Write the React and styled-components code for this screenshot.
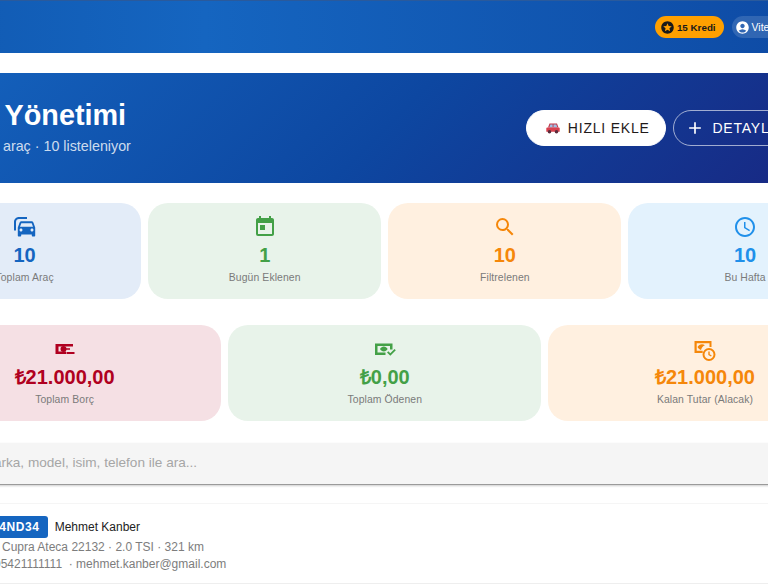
import React from 'react';
import styled, { createGlobalStyle } from 'styled-components';
import { MdAdd, MdOutlineAccessTime, MdAccountCircle, MdSearch, MdStars, MdToday } from 'react-icons/md';

const GlobalStyle = createGlobalStyle`
	html, body {
		background: #ffffff;
		margin: 0;
		overflow: hidden;
	}
	body, input {
		font-family: 'Liberation Sans', Arial, sans-serif;
	}
`;
const Viewport = styled.div`
	height: 584px;
	overflow: hidden;
	width: 768px;
`;
const Page = styled.div`
	margin-left: -116px;
	width: 1001.6px;
`;
const Nav = styled.header`
	align-items: center;
	background: linear-gradient(90deg, #1058b0 0%, #1565c0 32%, #0d47a1 100%);
	border-top: 1px solid #2a5a9c;
	box-sizing: border-box;
	display: flex;
	gap: 8px;
	height: 53px;
	justify-content: flex-end;
	padding-right: 24px;
`;
const CreditPill = styled.div`
	align-items: center;
	background: #ffa000;
	border-radius: 11px;
	color: #1a1a1a;
	display: flex;
	font-size: 9.8px;
	font-weight: 700;
	gap: 2px;
	height: 22px;
	padding: 0 8px 0 5px;
	& svg {
		font-size: 15px;
	}
`;
const UserPill = styled.div`
	align-items: center;
	background: rgba(255, 255, 255, 0.14);
	border-radius: 11px;
	box-sizing: border-box;
	color: #ffffff;
	display: flex;
	font-size: 10.4px;
	gap: 2px;
	height: 22px;
	padding: 0 8px 0 3px;
	white-space: nowrap;
	width: 130px;
	& svg {
		font-size: 15px;
	}
`;
const Hero = styled.section`
	align-items: center;
	background: linear-gradient(135deg, #1565c0 0%, #0d47a1 50%, #1a237e 100%);
	box-sizing: border-box;
	color: #ffffff;
	display: flex;
	height: 110px;
	justify-content: space-between;
	margin-top: 20px;
	padding: 0 55px 0 49px;
`;
const HeroText = styled.div`
	padding-bottom: 3px;
`;
const Title = styled.h1`
	font-size: 28.8px;
	font-weight: 700;
	line-height: 34px;
	margin: 0 0 6px;
`;
const Subtitle = styled.p`
	color: rgba(255, 255, 255, 0.8);
	font-size: 14.3px;
	line-height: 17px;
	margin: 0;
`;
const HeroActions = styled.div`
	display: flex;
	gap: 6.4px;
`;
const HeroButton = styled.button`
	align-items: center;
	background: ${p => (p.$solid ? '#ffffff' : 'transparent')};
	border: 1px solid ${p => (p.$solid ? '#ffffff' : 'rgba(255, 255, 255, 0.6)')};
	border-radius: 18px;
	box-sizing: border-box;
	color: ${p => (p.$solid ? '#1f1a1a' : '#ffffff')};
	display: flex;
	font-family: inherit;
	font-size: 14px;
	gap: ${p => (p.$solid ? 8 : 7)}px;
	height: 36px;
	justify-content: center;
	letter-spacing: 0.78px;
	padding: 0 0 0 ${p => (p.$solid ? 3 : 0)}px;
	width: ${p => p.$width}px;
`;
const StatGrid = styled.div`
	display: grid;
	gap: 7px;
	grid-template-columns: repeat(${p => p.$columns}, 1fr);
	margin-top: ${p => p.$top}px;
	padding: 0 24px;
`;
const StatCard = styled.div`
	align-items: center;
	background: ${p => p.$bg};
	border-radius: 20px;
	box-sizing: border-box;
	display: flex;
	flex-direction: column;
	height: 95.5px;
	padding-top: 12px;
`;
const StatIcon = styled.div`
	color: ${p => p.$color};
	display: flex;
	font-size: 24px;
	height: 24px;
`;
const StatValue = styled.div`
	color: ${p => p.$color};
	font-size: 20px;
	font-weight: 700;
	line-height: 24px;
	margin-top: 4px;
`;
const StatLabel = styled.div`
	color: #7a7a7a;
	font-size: 10.4px;
	letter-spacing: 0.1px;
	line-height: 14px;
	margin-top: 3.5px;
`;
const SearchBox = styled.div`
	background: #f5f5f5;
	border-bottom: 1px solid #9a9a9a;
	box-shadow: 0 1px 2px rgba(0, 0, 0, 0.2);
	box-sizing: border-box;
	height: 42px;
	margin: 22.5px 24px 0;
`;
const SearchInput = styled.input`
	background: transparent;
	border: 0;
	box-sizing: border-box;
	font-size: 13.6px;
	height: 100%;
	outline: none;
	padding: 0 0 2px 33px;
	width: 100%;
	&::placeholder {
		color: #a6a6a6;
		opacity: 1;
	}
`;
const VehicleList = styled.div`
	border-top: 1px solid #f5f5f5;
	margin: 18px 24px 0;
`;
const VehicleRow = styled.div`
	border-bottom: 1px solid #eeeeee;
	box-sizing: border-box;
	height: 80px;
	padding: 12px 0 0 76px;
`;
const RowHead = styled.div`
	align-items: center;
	display: flex;
	gap: 7px;
	margin-bottom: 1px;
`;
const PlateChip = styled.span`
	background: #1565c0;
	border-radius: 3px;
	color: #ffffff;
	font-size: 12px;
	font-weight: 700;
	letter-spacing: 0.6px;
	line-height: 22px;
	padding: 0 8px;
`;
const OwnerName = styled.span`
	color: #222222;
	font-size: 12px;
`;
const RowMeta = styled.div`
	color: #7d7d7d;
	font-size: 12px;
	line-height: 17px;
	padding-left: ${p => p.$indent || 0}px;
	white-space: pre;
`;

const CarsIcon = () => (
	<svg fill='currentColor' height='24' viewBox='0 0 24 24' width='24'>
		<path d='M14 2H6C3.200 2 1 4.200 1 7v8.500h2V7c0-1.700 1.300-3 3-3h8z' />
		<path d='M20.500 7.800c-.2-.9-1-1.600-2-1.600H8.500c-1 0-1.700.7-2 1.600L4.800 12.500v8c0 .6.400 1 1 1h1.400c.6 0 1-.4 1-1v-1h10.600v1c0 .6.400 1 1 1h1.400c.6 0 1-.4 1-1v-8zM8 16.500c-.8 0-1.500-.7-1.500-1.500s.7-1.500 1.500-1.500 1.500.7 1.500 1.500-.7 1.500-1.500 1.500zm11 0c-.8 0-1.500-.7-1.500-1.500s.7-1.500 1.500-1.500 1.500.7 1.500 1.500-.7 1.500-1.500 1.500zM7 11.800l1.300-3.600h10.400l1.300 3.600z' />
	</svg>
);
const MoneyMinusIcon = () => (
	<svg fill='currentColor' height='24' viewBox='0 0 24 24' width='24'>
		<path d='M2.500 7H20v2.500H5.500v5H13V17H2.500z' />
		<circle cx='10.500' cy='12' r='3' />
		<path d='M12 11.200h5v1.600h-5zM13.500 15H21.500v2h-8z' />
	</svg>
);
const MoneyCheckIcon = () => (
	<svg fill='currentColor' height='24' viewBox='0 0 24 24' width='24'>
		<path d='M2 6.500h17.500v6H17V9H4.500v6.500h8v2.500H2z' />
		<path d='M7 12c.8-1.600 2.200-2.500 3.800-2.500s3 .9 3.800 2.500c-.8 1.600-2.200 2.500-3.800 2.500S7.800 13.600 7 12z' />
		<path d='M14 15.500l1.300-1.300 2 2 4.200-4.200 1.300 1.300-5.500 5.500z' />
	</svg>
);
const MoneyClockIcon = () => (
	<svg fill='currentColor' height='24' viewBox='0 0 24 24' width='24'>
		<path d='M1.500 4h17v6h-2V6.200H3.700v7.600h6V16H1.500z' />
		<path d='M4.500 10c.9-1.700 2.500-2.800 4.500-2.800 1.100 0 2.100.3 2.900 1-1.300.5-2.300 1.400-3 2.600-.4.800-.7 1.500-.9 2.200-1.600-.5-2.800-1.600-3.500-3z' />
		<path fillRule='evenodd' d='M16 11a6.500 6.500 0 1 1 0 13 6.500 6.500 0 0 1 0-13zm0 2a4.500 4.500 0 1 0 0 9 4.500 4.500 0 0 0 0-9zM15.300 14.500h1.400v2.800l2 1.200-.7 1.100-2.700-1.600z' />
	</svg>
);
const SuvIcon = () => (
	<svg height='11' viewBox='0 0 14 11' width='14'>
		<path d='M3.500 0.500h7.500l1.500 4H2z' fill='#c0394b' />
		<path d='M4.300 1.500h2.300v3H3.300zM7.500 1.500h2.800l1 3H7.500z' fill='#9fc0e4' />
		<path d='M1.200 4.500h11.600c.5 0 .9.400.9.900V8.800H.3V5.400c0-.5.400-.9.900-.9z' fill='#d9414f' />
		<circle cx='3.500' cy='8.800' fill='#5a2a3a' r='1.800' />
		<circle cx='10.500' cy='8.800' fill='#5a2a3a' r='1.800' />
	</svg>
);

const countStats = [
	{ bg: '#e3ecf8', color: '#1565c0', icon: <CarsIcon />, label: 'Toplam Araç', value: '10' },
	{ bg: '#e8f3ea', color: '#43a047', icon: <MdToday />, label: 'Bugün Eklenen', value: '1' },
	{ bg: '#fff0e0', color: '#f5870a', icon: <MdSearch />, label: 'Filtrelenen', value: '10' },
	{ bg: '#e3f2fd', color: '#2090ea', icon: <MdOutlineAccessTime />, label: 'Bu Hafta', value: '10' },
];
const moneyStats = [
	{ bg: '#f5e0e4', color: '#b00020', icon: <MoneyMinusIcon />, label: 'Toplam Borç', value: '₺21.000,00' },
	{ bg: '#e8f3ea', color: '#43a047', icon: <MoneyCheckIcon />, label: 'Toplam Ödenen', value: '₺0,00' },
	{ bg: '#fff0e0', color: '#f5870a', icon: <MoneyClockIcon />, label: 'Kalan Tutar (Alacak)', value: '₺21.000,00' },
];

const StatRow = ({ items, top }) => (
	<StatGrid $columns={items.length} $top={top}>
		{items.map(item => (
			<StatCard $bg={item.bg} key={item.label}>
				<StatIcon $color={item.color}>{item.icon}</StatIcon>
				<StatValue $color={item.color}>{item.value}</StatValue>
				<StatLabel>{item.label}</StatLabel>
			</StatCard>
		))}
	</StatGrid>
);

const App = () => (
	<Viewport>
		<GlobalStyle />
		<Page>
			<Nav>
				<CreditPill>
					<MdStars />
					15 Kredi
				</CreditPill>
				<UserPill>
					<MdAccountCircle />
					Vitek Oto Servis
				</UserPill>
			</Nav>
			<Hero>
				<HeroText>
					<Title>Araç Yönetimi</Title>
					<Subtitle>Toplam 10 araç · 10 listeleniyor</Subtitle>
				</HeroText>
				<HeroActions>
					<HeroButton $solid $width={140}>
						<SuvIcon />
						HIZLI EKLE
					</HeroButton>
					<HeroButton $width={158}>
						<MdAdd size={20} />
						DETAYLI EKLE
					</HeroButton>
				</HeroActions>
			</Hero>
			<StatRow items={countStats} top={20} />
			<StatRow items={moneyStats} top={26.5} />
			<SearchBox>
				<SearchInput placeholder='Plaka, marka, model, isim, telefon ile ara...' />
			</SearchBox>
			<VehicleList>
				<VehicleRow>
					<RowHead>
						<PlateChip>34ND34</PlateChip>
						<OwnerName>Mehmet Kanber</OwnerName>
					</RowHead>
					<RowMeta $indent={18}>Cupra Ateca 22132 · 2.0 TSI · 321 km</RowMeta>
					<RowMeta $indent={10}>05421111111  · mehmet.kanber@gmail.com</RowMeta>
				</VehicleRow>
			</VehicleList>
		</Page>
	</Viewport>
);

export default App;
